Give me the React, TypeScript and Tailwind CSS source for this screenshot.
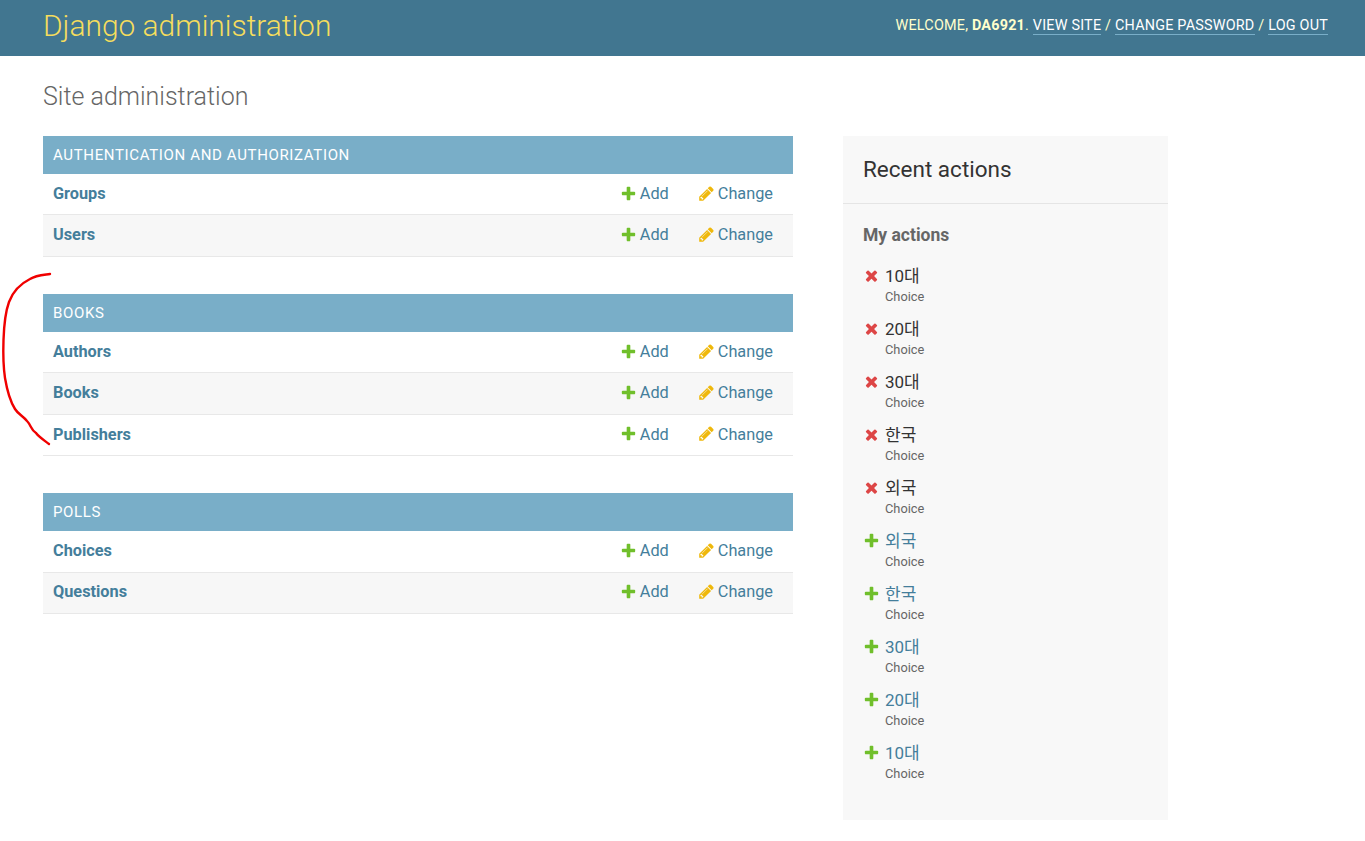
const modules = [
  { caption: "Authentication and authorization", rows: ["Groups", "Users"] },
  { caption: "Books", rows: ["Authors", "Books", "Publishers"] },
  { caption: "Polls", rows: ["Choices", "Questions"] },
];

const actions = [
  { name: "10대", kind: "delete" },
  { name: "20대", kind: "delete" },
  { name: "30대", kind: "delete" },
  { name: "한국", kind: "delete" },
  { name: "외국", kind: "delete" },
  { name: "외국", kind: "add" },
  { name: "한국", kind: "add" },
  { name: "30대", kind: "add" },
  { name: "20대", kind: "add" },
  { name: "10대", kind: "add" },
];

function AddIcon() {
  return (
    <svg className="w-[17px] h-[17px] shrink-0 -translate-y-px" viewBox="0 0 1792 1792">
      <path
        fill="#70bf2b"
        d="M1600 796v192q0 40-28 68t-68 28h-416v416q0 40-28 68t-68 28h-192q-40 0-68-28t-28-68v-416h-416q-40 0-68-28t-28-68v-192q0-40 28-68t68-28h416v-416q0-40 28-68t68-28h192q40 0 68 28t28 68v416h416q40 0 68 28t28 68z"
      />
    </svg>
  );
}

function ChangeIcon() {
  return (
    <svg className="w-[17px] h-[17px] shrink-0 -translate-y-px" viewBox="0 0 1792 1792">
      <path
        fill="#efb80b"
        d="M491 1536l91-91-235-235-91 91v107h128v128h107zm523-928q0-22-22-22-10 0-17 7l-542 542q-7 7-7 17 0 22 22 22 10 0 17-7l542-542q7-7 7-17zm-54-192l416 416-832 832h-416v-416zm683 96q0 53-37 90l-166 166-416-416 166-165q36-38 90-38 53 0 91 38l235 234q37 39 37 91z"
      />
    </svg>
  );
}

function DeleteIcon() {
  return (
    <svg className="w-[17px] h-[17px] shrink-0 -translate-y-px" viewBox="0 0 1792 1792">
      <path
        fill="#dd4646"
        d="M1490 1322q0 40-28 68l-136 136q-28 28-68 28t-68-28l-294-294-294 294q-28 28-68 28t-68-28l-136-136q-28-28-28-68t28-68l294-294-294-294q-28-28-28-68t28-68l136-136q28-28 68-28t68 28l294 294 294-294q28-28 68-28t68 28l136 136q28 28 28 68t-28 68l-294 294 294 294q28 28 28 68z"
      />
    </svg>
  );
}

export default function App() {
  return (
    <div className="relative min-h-[841px] bg-white font-['Roboto','Noto_Sans_CJK_KR',sans-serif] text-[#333]">
      {/* Header */}
      <header className="h-[56px] bg-[#417690] pl-[43px] pr-[37px] pb-[4px] flex items-center justify-between">
        <h1 className="text-[29.9px] font-light text-[#f5dd5d]">Django administration</h1>
        <div className="text-[14.4px] uppercase tracking-[0.2px] text-[#ffc]">
          Welcome, <strong className="font-bold">DA6921</strong>.{" "}
          <a className="text-white border-b border-[#79aec8]">View site</a> /{" "}
          <a className="text-white border-b border-[#79aec8]">Change password</a> /{" "}
          <a className="text-white border-b border-[#79aec8]">Log out</a>
        </div>
      </header>

      {/* Content */}
      <main className="pl-[43px] pt-[24px]">
        <h2 className="text-[25px] leading-[34px] font-light text-[#666] mb-[22px]">Site administration</h2>
        <div className="flex items-start gap-[50px]">
          <div className="w-[750px] flex flex-col gap-[37.4px]">
            {modules.map((m) => (
              <section key={m.caption}>
                <div className="h-[38px] bg-[#79aec8] px-[10px] flex items-center text-[15px] uppercase tracking-[0.65px] text-white">
                  {m.caption}
                </div>
                {m.rows.map((row, i) => (
                  <div
                    key={row}
                    className={`h-[41.3px] pl-[10px] pr-[20px] flex items-center border-b border-[#e8e8e8] text-[16.3px] ${
                      i % 2 === 1 ? "bg-[#f7f7f7]" : "bg-white"
                    }`}
                  >
                    <a className="font-bold text-[#447e9b] flex-1">{row}</a>
                    <a className="flex items-center gap-[3px] text-[#447e9b] w-[78px]">
                      <AddIcon />
                      Add
                    </a>
                    <a className="flex items-center gap-[3px] text-[#447e9b]">
                      <ChangeIcon />
                      Change
                    </a>
                  </div>
                ))}
              </section>
            ))}
          </div>

          {/* Recent actions */}
          <aside className="w-[325px] h-[684px] bg-[#f8f8f8]">
            <h2 className="h-[68px] px-[20px] flex items-center border-b border-[#e5e5e5] text-[22.5px] text-[#333]">
              Recent actions
            </h2>
            <div className="px-[20px] pt-[20px]">
              <h3 className="text-[17.5px] leading-[22px] font-bold text-[#666] mb-[19px]">My actions</h3>
              <ul className="flex flex-col gap-[10px]">
                {actions.map((a, i) => (
                  <li key={i} className="flex gap-[5px] h-[43px]">
                    <span className="mt-[3px]">{a.kind === "add" ? <AddIcon /> : <DeleteIcon />}</span>
                    <div>
                      <div
                        className={`text-[17px] leading-[23px] ${
                          a.kind === "add" ? "text-[#447e9b]" : "text-[#333]"
                        }`}
                      >
                        {a.name}
                      </div>
                      <div className="text-[12.8px] leading-[18px] text-[#666]">Choice</div>
                    </div>
                  </li>
                ))}
              </ul>
            </div>
          </aside>
        </div>
      </main>

      {/* Hand-drawn annotation */}
      <svg className="absolute left-0 top-[260px] w-[60px] h-[200px] pointer-events-none" viewBox="0 0 60 200" fill="none">
        <path
          d="M50 14C42 15 36 15 30 19C22 23 13 31 9 42C5 53 4 65 3.5 80C3 95 3.5 108 5 118C7 130 10 141 15 149C18 154 23 156 27 161C31 165 31 170 36 173C39 177 45 181 49 184"
          stroke="#f00000"
          strokeWidth="2.4"
          strokeLinecap="round"
        />
      </svg>
    </div>
  );
}
